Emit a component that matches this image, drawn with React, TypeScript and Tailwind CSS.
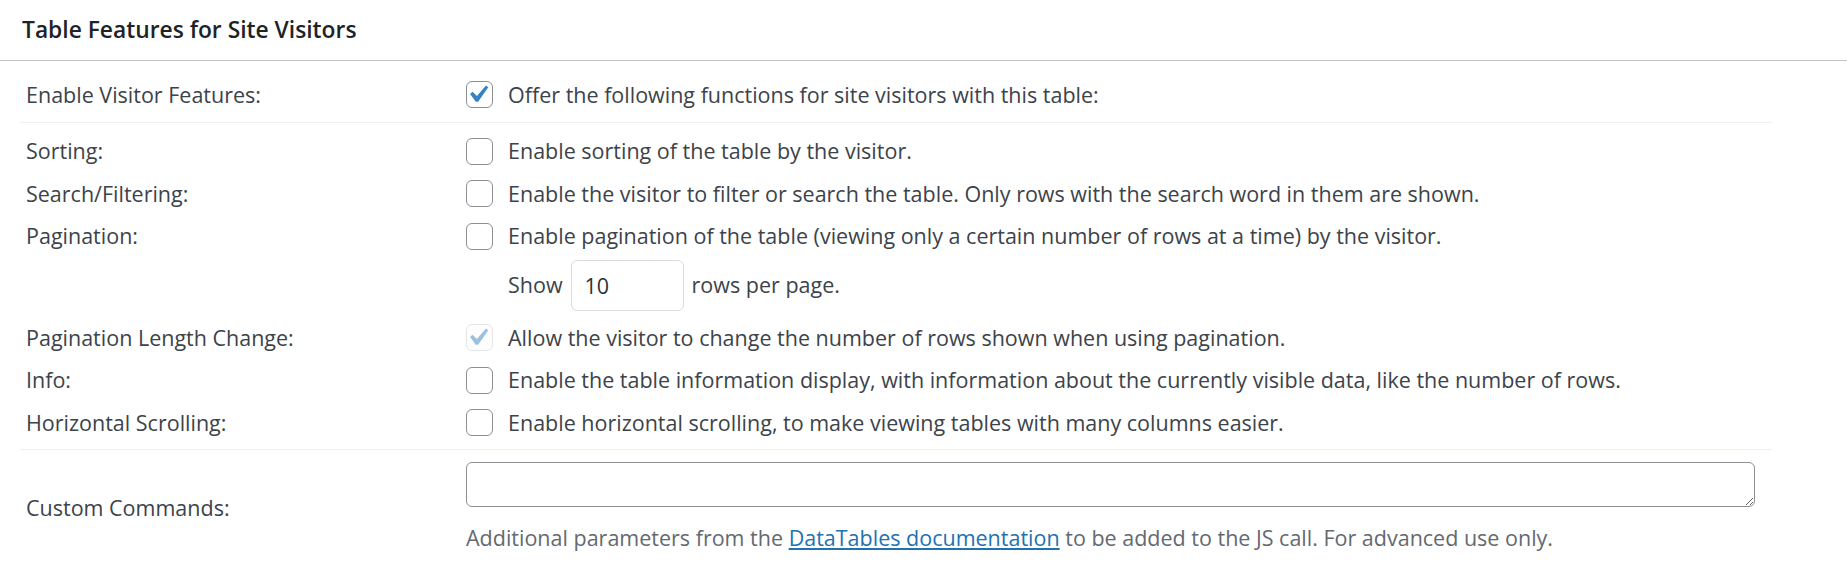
import React from 'react';

type CheckProps = { checked?: boolean; disabled?: boolean };

function Check({ checked = false, disabled = false }: CheckProps) {
  return (
    <span
      className={
        disabled
          ? 'relative shrink-0 w-[27px] h-[27px] rounded-[6px] border border-[#e6e6e8] bg-[#fdfdfd]'
          : 'relative shrink-0 w-[27px] h-[27px] rounded-[6px] border border-[#8c8f94] bg-white'
      }
    >
      {checked && (
        <svg viewBox="0 0 20 20" className="absolute left-[-7px] top-[-5px] w-[35px] h-[35px]">
          <path
            d="M14.83 4.89l1.34.94-5.81 8.38H9.02L5.78 9.67l1.34-1.25 2.57 2.4z"
            fill={disabled ? '#9cc0e1' : '#3582c4'}
          />
        </svg>
      )}
    </span>
  );
}

type RowProps = { label: string; text: string; checked?: boolean; disabled?: boolean };

function Row({ label, text, checked, disabled }: RowProps) {
  return (
    <div className="grid grid-cols-[446px_1fr] items-center h-[42.5px]">
      <div className="pl-[6px]">{label}</div>
      <label className="flex items-center gap-[15px]">
        <Check checked={checked} disabled={disabled} />
        <span>{text}</span>
      </label>
    </div>
  );
}

const TOP_ROWS: RowProps[] = [
  { label: 'Sorting:', text: 'Enable sorting of the table by the visitor.' },
  { label: 'Search/Filtering:', text: 'Enable the visitor to filter or search the table. Only rows with the search word in them are shown.' },
  { label: 'Pagination:', text: 'Enable pagination of the table (viewing only a certain number of rows at a time) by the visitor.' },
];

const BOTTOM_ROWS: RowProps[] = [
  { label: 'Pagination Length Change:', text: 'Allow the visitor to change the number of rows shown when using pagination.', checked: true, disabled: true },
  { label: 'Info:', text: 'Enable the table information display, with information about the currently visible data, like the number of rows.' },
  { label: 'Horizontal Scrolling:', text: 'Enable horizontal scrolling, to make viewing tables with many columns easier.' },
];

export default function App() {
  return (
    <div className="min-h-screen bg-white font-['Open_Sans',sans-serif] text-[21.5px] leading-[30px] text-[#3c434a]">
      {/* Postbox header */}
      <h2 className="h-[61px] flex items-center px-[22px] border-b border-[#c3c4c7] text-[22.8px] font-semibold text-[#1d2327]">
        Table Features for Site Visitors
      </h2>

      <div className="ml-[20px] w-[1752px]">
        {/* Master switch */}
        <div className="grid grid-cols-[446px_1fr] items-center h-[62px] pt-[6px] border-b border-[#f0f0f1]">
          <div className="pl-[6px]">Enable Visitor Features:</div>
          <label className="flex items-center gap-[15px]">
            <Check checked />
            <span>Offer the following functions for site visitors with this table:</span>
          </label>
        </div>

        {/* Feature list */}
        <div className="pt-[7px] pb-[5px] border-b border-[#f0f0f1]">
          {TOP_ROWS.map(r => (
            <Row key={r.label} {...r} />
          ))}
          <div className="grid grid-cols-[446px_1fr] pt-[2px] pb-[6px]">
            <div />
            <div className="flex items-center pl-[42px] gap-[8px]">
              <span>Show</span>
              <input
                type="text"
                defaultValue="10"
                className="w-[113px] h-[51px] px-[13px] rounded-[6px] border border-[#dcdcde] bg-white text-[21.5px] text-[#2c3338] outline-none"
              />
              <span>rows per page.</span>
            </div>
          </div>
          {BOTTOM_ROWS.map(r => (
            <Row key={r.label} {...r} />
          ))}
        </div>

        {/* Custom commands */}
        <div className="grid grid-cols-[446px_1fr] items-center pt-[12px] pb-[12px]">
          <div className="pl-[6px]">Custom Commands:</div>
          <div>
            <textarea
              rows={1}
              className="block w-[1289px] h-[45px] rounded-[6px] border border-[#8c8f94] bg-white px-[13px] py-[6px] outline-none"
            />
            <p className="mt-[16px] text-[#646970]">
              Additional parameters from the{' '}
              <a href="#" className="text-[#2271b1] underline">
                DataTables documentation
              </a>{' '}
              to be added to the JS call. For advanced use only.
            </p>
          </div>
        </div>
      </div>
    </div>
  );
}
